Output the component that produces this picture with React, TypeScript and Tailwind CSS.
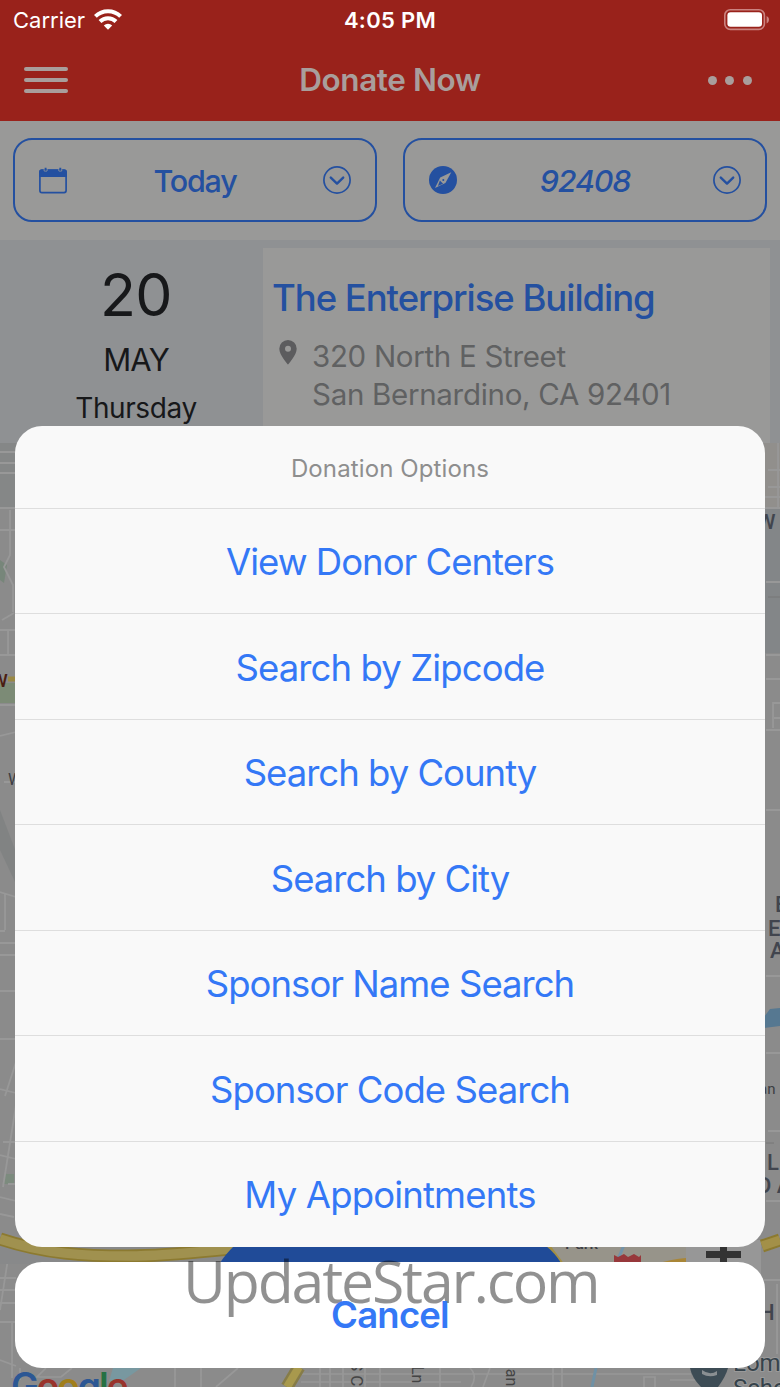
import React from "react";

const options = [
  { label: "View Donor Centers", tracking: "tracking-[-1px]" },
  { label: "Search by Zipcode", tracking: "tracking-[-0.9px]" },
  { label: "Search by County", tracking: "tracking-[-1px]" },
  { label: "Search by City", tracking: "tracking-[-1px]" },
  { label: "Sponsor Name Search", tracking: "tracking-[-0.98px]" },
  { label: "Sponsor Code Search", tracking: "tracking-[-0.95px]" },
  { label: "My Appointments", tracking: "tracking-[-0.83px]" },
];

function WifiIcon() {
  return (
    <svg className="mb-[2px]" width="28" height="21" viewBox="0 0 28 21" fill="none" stroke="#fff" strokeWidth="4">
      <path d="M1.4 7.4a18 18 0 0 1 25.2 0" />
      <path d="M6 12.5a11.5 11.5 0 0 1 16 0" />
      <path d="M14 20.8l-4.2-4.4a6 6 0 0 1 8.4 0z" fill="#fff" stroke="none" />
    </svg>
  );
}

function BatteryIcon() {
  return (
    <svg width="46" height="22" viewBox="0 0 46 22">
      <rect x="0.8" y="0.8" width="39.6" height="19.6" rx="5.5" fill="none" stroke="#cb8380" strokeWidth="1.6" />
      <rect x="3.4" y="3.3" width="34.6" height="14.4" rx="3.2" fill="#fff" />
      <path d="M42.6 7v7.4c3.2-1.3 3.2-6.1 0-7.4z" fill="#cb8380" />
    </svg>
  );
}

function CalendarIcon() {
  return (
    <svg width="28" height="27" viewBox="0 0 28 27">
      <rect x="0.9" y="3.2" width="26.2" height="22.4" rx="2" fill="none" stroke="#2450a0" strokeWidth="1.7" />
      <path d="M0.2 10V5q0-2.6 2.6-2.6h22.4q2.6 0 2.6 2.6v5z" fill="#2450a0" />
      <path d="M5.2 1.4v2.6h2.8V1.4M19.9 1.4v2.6h2.8V1.4" stroke="#999998" strokeWidth="0.9" fill="none" />
      <path d="M6.6 0.8v2.8M21.3 0.8v2.8" stroke="#2450a0" strokeWidth="1.9" />
    </svg>
  );
}

function CompassIcon() {
  return (
    <svg width="28" height="28" viewBox="0 0 28 28">
      <circle cx="14" cy="14" r="14" fill="#2450a0" />
      <path d="M22.3 6.2L16.4 17 6 22l5.2-10.5z" fill="#999998" />
      <path d="M10.9 14.6l3.2 3.1-5.2 2.2z" fill="#2450a0" />
      <circle cx="14.3" cy="13.9" r="1" fill="#2450a0" />
    </svg>
  );
}

function ChevronCircleIcon() {
  return (
    <svg className="-mt-px" width="28" height="28" viewBox="0 0 28 28" fill="none" stroke="#2450a0">
      <circle cx="14" cy="14" r="13.1" strokeWidth="1.7" />
      <path d="M7.8 11.6l6.2 6 6.2-6" strokeWidth="2.4" strokeLinecap="round" strokeLinejoin="round" />
    </svg>
  );
}

function PinIcon() {
  return (
    <svg className="mt-[3px]" width="18" height="25" viewBox="0 0 18 25">
      <path
        d="M9 0a8.7 8.7 0 0 0-8.7 8.7C0.3 15 9 24.6 9 24.6S17.7 15 17.7 8.7A8.7 8.7 0 0 0 9 0zm0 5.8a3 3 0 1 1 0 6 3 3 0 0 1 0-6z"
        fill="#5c5c5e"
        fillRule="evenodd"
      />
    </svg>
  );
}

// Street map behind the sheet, drawn in page coordinates
function StreetMap() {
  return (
    <svg className="block" width="780" height="944" viewBox="0 443 780 944" fontFamily="Roboto, sans-serif">
      <rect y="443" width="780" height="944" fill="#8b8b8b" />
      <rect y="443" width="16" height="66" fill="#858787" />
      <path d="M764 443h16v65h-16z" fill="#918f8c" />
      <path d="M764 508h16v145h-16z" fill="#838688" />
      <path d="M0 560l7 5-3 18-4-3z" fill="#77867a" />
      <path d="M0 683h16v20H0z" fill="#7c8b76" />
      <path d="M0 810l16 42v32L0 850z" fill="#818383" />
      <path d="M4 1174h10v10H4z" fill="#7c8b7e" />

      <g stroke="#989898" strokeWidth="1.8" fill="none">
        <path d="M0 452h16M0 463h16M0 473h16M0 508h16M0 530h16M10 510v45l-6 12 9 18v27M2 620l12-7M0 630h16M8 630v24M0 655h16M0 705h16M0 736l16-4M4 782h12" />
        <path d="M0 892l16 5M5 894v36M0 931h5M0 943h16M0 955h16M0 991h16M0 1039h16M0 1089l16 4M16 1062L5 1096M16 1105L3 1187M3 1142h13M0 1155l16 4M8 1184h8M0 1197l16 4M0 1214l14 3" />
        <path d="M778 443v65M768 470h12M768 487h12M764 497h16M764 508h16M766 582h14M766 655h14M766 679h14M780 703h-7v25M766 730h14M774 718h6M766 810h14" />
        <path d="M766 976h14M766 1053h14M768 1131h12M766 1201h14M764 1280h16M777 1284v70" />
        <path d="M10 1246L0 1310M0 1278h16M0 1290h16M0 1303h16M0 1322h16M12 1322v56M0 1360l16 6" />
      </g>
      <path d="M768 597h12M766 1143h8" stroke="#777" />

      {/* bottom street grid */}
      <path
        d="M20 1368v12M46 1368l-9 9h24l11-9M175 1368v19M201 1368v19M238 1368l-22 19M320 1368v19M330 1368v19M343 1368v19M301 1374h390M301 1382h160M365 1368v19M380 1368v19M440 1368v19M470 1368q8 8 1 19M490 1368l-7 19M553 1368v19M562 1368v19M644 1387v-10h11v10M670 1380h25"
        stroke="#989898"
        strokeWidth="1.7"
        fill="none"
      />
      <path d="M113 1368h28l-20 14-12-1z" fill="#7898a0" />
      <path d="M299 1367l-12 20" stroke="#867c48" strokeWidth="13" />
      <path d="M299 1367l-12 20" stroke="#a8994d" strokeWidth="8" />
      <path d="M596 1368q-2 9-4 19" stroke="#6f91a5" strokeWidth="3" fill="none" />
      <path d="M764 1017l6-8 10-1v18l-16 2z" fill="#567891" />

      {/* strip between the sheet and the cancel button */}
      <path d="M0 1246h232v18H0z" fill="#88898a" />
      <path d="M0 1239C45 1254 85 1256 128 1256S205 1251 250 1247" stroke="#8c7a30" strokeWidth="13" fill="none" />
      <path d="M0 1239C45 1254 85 1256 128 1256S205 1251 250 1247" stroke="#a0914f" strokeWidth="9.5" fill="none" />
      <path d="M540 1240h146v24H540z" fill="#97948a" />
      <path d="M546 1243l15 20" stroke="#a38f43" strokeWidth="4" />
      <path d="M624 1245q-3 8-8 18" stroke="#7393a8" strokeWidth="3" fill="none" />
      <path d="M656 1264q16-5 30-6v6z" fill="#a98637" />
      <path d="M614 1255l4 2 6-3 4 3 6-3 5 3 2-2v10h-27z" fill="#97383b" />
      <text x="565" y="1249" fontSize="16" fontWeight="500" fill="#3c3e45">Park</text>
      <path d="M686 1240h75v80h-75z" fill="#979797" />
      <path d="M762 1246l18-6" stroke="#8c7a30" strokeWidth="13" />
      <path d="M762 1246l18-6" stroke="#a39048" strokeWidth="9" />
      <path d="M706 1251h35v7h-35z" fill="#333" />
      <path d="M720 1247h7v16h-7z" fill="#333" />
      <path d="M220 1263q4-7 14-17h312q9 7 15 17v10H220z" fill="#204b98" />

      <text x="-9" y="687" fontSize="19" fontWeight="500" fill="#4a1d13">W</text>
      <path d="M8 679h8" stroke="#9a8945" strokeWidth="5" />
      <text x="8" y="785" fontSize="16" fill="#3c3e42">W</text>
      <g fill="#41454e" fontSize="22" fontWeight="500">
        <text x="757" y="529" fontSize="21">W</text>
        <text x="775" y="912">E</text>
        <text x="768" y="936">E</text>
        <text x="770" y="958">A</text>
        <text x="767" y="1170">L</text>
        <text x="757" y="1193">D A</text>
        <text x="759" y="1320">H</text>
      </g>
      <text x="759" y="1094" fontSize="15" fill="#3c3e42">an</text>
      <text transform="translate(351 1361) rotate(90)" fontSize="17" fill="#444">S C</text>
      <text transform="translate(412 1366) rotate(90)" fontSize="16" fill="#444">Ln</text>
      <text transform="translate(506 1360) rotate(90)" fontSize="16" fill="#444">nan</text>
      <path d="M690 1368h38q-2 8-10 19h-17q-9-9-11-19z" fill="#3d4c55" />
      <path d="M702 1370q8 6 15 1v4q-8 3-15-1z" fill="#8a8f92" />
      <g fill="#36434b" fontSize="24" stroke="#9a9a9a" strokeWidth="2" paintOrder="stroke">
        <text x="733" y="1371">Loma</text>
        <text x="733" y="1396">School</text>
      </g>
      <text x="11" y="1399" fontFamily="Inter, sans-serif" fontSize="37" fontWeight="600" letterSpacing="-2">
        <tspan fill="#2c5794">G</tspan>
        <tspan fill="#99332b">o</tspan>
        <tspan fill="#a17e1b">o</tspan>
        <tspan fill="#2c5794">g</tspan>
        <tspan fill="#267143">l</tspan>
        <tspan fill="#99332b">e</tspan>
      </text>
    </svg>
  );
}

function Header() {
  return (
    <header className="h-[121px] bg-[#99221b]">
      <div className="grid h-10 grid-cols-3 items-center px-[10px] text-[22px] text-white">
        <div className="flex items-center gap-[9px] pl-[3px]">
          <span>Carrier</span>
          <WifiIcon />
        </div>
        <span className="text-center font-semibold tracking-[0.3px]">4:05 PM</span>
        <div className="flex justify-end">
          <BatteryIcon />
        </div>
      </div>
      <div className="flex h-20 items-center justify-between px-6">
        <div className="flex w-12 flex-col gap-[7px] pr-1">
          <span className="h-1 rounded-full bg-[#a99e9c]" />
          <span className="h-1 rounded-full bg-[#a99e9c]" />
          <span className="h-1 rounded-full bg-[#a99e9c]" />
        </div>
        <h1 className="text-[31.5px] font-semibold tracking-[-0.4px] text-[#a99e9c]">Donate Now</h1>
        <div className="flex w-12 gap-[8.5px]">
          <span className="size-[9px] rounded-full bg-[#a99e9c]" />
          <span className="size-[9px] rounded-full bg-[#a99e9c]" />
          <span className="size-[9px] rounded-full bg-[#a99e9c]" />
        </div>
      </div>
    </header>
  );
}

function Filters() {
  return (
    <div className="flex h-[119px] gap-[26px] bg-[#999998] px-[13px] pt-[17px] text-[30.5px] font-medium text-[#2450a0]">
      <div className="flex h-[84px] flex-1 items-center justify-between rounded-[19px] border-2 border-[#2450a0] px-6">
        <CalendarIcon />
        <span className="pt-px tracking-[-1.2px]">Today</span>
        <ChevronCircleIcon />
      </div>
      <div className="flex h-[84px] flex-1 items-center justify-between rounded-[19px] border-2 border-[#2450a0] px-6">
        <CompassIcon />
        <span className="pt-px italic tracking-[-1.2px]">92408</span>
        <ChevronCircleIcon />
      </div>
    </div>
  );
}

function DriveCard() {
  return (
    <div className="flex h-[203px] bg-[#8f9193] pr-[10px] pt-2">
      <div className="flex w-[263px] flex-col items-center pl-[9px] text-[#17181a]">
        <span className="mt-3 text-[59px] leading-[70px] tracking-[-0.5px]">20</span>
        <span className="mt-[13px] text-[31px] leading-[34px] tracking-[-0.8px]">MAY</span>
        <span className="mt-[17px] text-[28px] leading-[28px] tracking-[-0.4px]">Thursday</span>
      </div>
      <div className="flex-1 bg-[#999998] pl-[9px] pt-[28px]">
        <h2 className="text-[36.5px] font-medium leading-[44px] tracking-[-1.05px] text-[#2450a0]">
          The Enterprise Building
        </h2>
        <div className="mt-[17px] flex gap-[15px] pl-[7px]">
          <PinIcon />
          <p className="text-[29.5px] leading-[38px] tracking-[-0.3px] text-[#606162]">
            320 North E Street
            <br />
            San Bernardino, CA 92401
          </p>
        </div>
      </div>
    </div>
  );
}

function ActionSheet() {
  return (
    <div className="absolute left-[15px] top-[426px] flex w-[750px] flex-col gap-[15px] text-center text-[36.5px] text-[#3478f6]">
      <div className="overflow-hidden rounded-[27px] bg-[#f9f9f9]">
        <div className="flex h-[81.5px] items-center justify-center pt-[5px] text-[24px] tracking-[0.12px] text-[#8e8e8e]">
          Donation Options
        </div>
        {options.map(({ label, tracking }) => (
          <button key={label} className="block h-[105.6px] w-full border-t border-[#dedede] pt-[3px]">
            <span className={tracking}>{label}</span>
          </button>
        ))}
      </div>
      <div className="relative h-[106px] rounded-[27px] bg-white">
        <span className="absolute left-[168px] top-[-22px] font-['Open_Sans'] text-[59px] leading-[80px] tracking-[-2.2px] text-black/43">
          UpdateStar.com
        </span>
        <button className="relative h-full w-full pt-[2px] font-semibold tracking-[-0.8px]">Cancel</button>
      </div>
    </div>
  );
}

export default function App() {
  return (
    <main className="relative flex h-[1387px] w-[780px] flex-col overflow-hidden font-['Inter',sans-serif]">
      <Header />
      <Filters />
      <DriveCard />
      <StreetMap />
      <ActionSheet />
    </main>
  );
}
